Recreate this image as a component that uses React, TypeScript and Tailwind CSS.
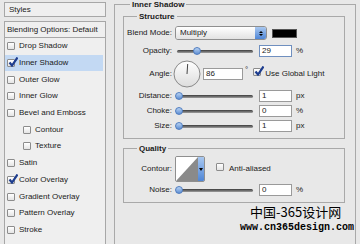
import React from 'react';

function Check({ on }: { on?: boolean }) {
  return (
    <span className="relative inline-flex w-[8px] h-[8px] shrink-0 border border-[#8c8c8c] bg-gradient-to-b from-white to-[#e4e4e4] rounded-[1px]">
      {on && (
        <svg viewBox="0 0 10 10" className="absolute -top-[3px] left-0 w-[10px] h-[10px]">
          <path d="M1.5 5.5 L4 8.5 L9.5 0.5" stroke="#1d3d8f" strokeWidth="2.2" fill="none" />
        </svg>
      )}
    </span>
  );
}

function Slider({ thumb }: { thumb: string }) {
  return (
    <div className="relative w-[84px] h-[8px] pl-[2px] pr-[6px] flex items-center">
      <div className="w-full h-[3px] rounded-full bg-gradient-to-b from-[#3c3c3c] to-[#a0a0a0]" />
      <span className={`absolute top-0 w-[8px] h-[8px] rounded-full bg-gradient-to-b from-[#b9d3f3] to-[#5f8fd3] border border-[#4f7cbf] ${thumb}`} />
    </div>
  );
}

function Field({ value, focus }: { value: string; focus?: boolean }) {
  return (
    <div
      className={`w-[33px] h-[12px] bg-white border ${focus ? 'border-[#6f8fbf]' : 'border-[#9a9a9a]'} pl-[2px] leading-[10px] text-[8px]`}
    >
      {value}
    </div>
  );
}

function Label({ children }: { children: React.ReactNode }) {
  return <div className="w-[48px] text-right shrink-0">{children}</div>;
}

function SliderRow({ label, value, unit, thumb, focus, className }: { label: string; value: string; unit: string; thumb: string; focus?: boolean; className: string }) {
  return (
    <div className={`flex items-center h-[12px] ${className}`}>
      <Label>{label}</Label>
      <div className="ml-[3px]">
        <Slider thumb={thumb} />
      </div>
      <Field value={value} focus={focus} />
      <span className="ml-[4px]">{unit}</span>
    </div>
  );
}

const items = [
  { name: 'Drop Shadow' },
  { name: 'Inner Shadow', on: true, sel: true },
  { name: 'Outer Glow' },
  { name: 'Inner Glow' },
  { name: 'Bevel and Emboss' },
  { name: 'Contour', sub: true },
  { name: 'Texture', sub: true },
  { name: 'Satin' },
  { name: 'Color Overlay', on: true },
  { name: 'Gradient Overlay' },
  { name: 'Pattern Overlay' },
  { name: 'Stroke' },
];

export default function App() {
  return (
    <div className="relative w-[360px] h-[244px] overflow-hidden bg-[#e8e8e8] text-[#1a1a1a] text-[8px] font-['Liberation_Sans',Arial,sans-serif] flex">
      {/* styles list */}
      <div className="ml-[4px] w-[102px] shrink-0 flex flex-col pt-[2px]">
        <div className="h-[15px] border border-[#a7a7a7] bg-[#efefef] flex items-center pl-[4px]">Styles</div>
        <div className="mt-[4px] h-[17px] border border-[#a7a7a7] bg-[#efefef] flex items-center pl-[2px]">
          Blending Options: Default
        </div>
        <div className="flex-1 border-x border-[#a7a7a7] bg-[#efefef] pr-[2px]">
          {items.map((it) => (
            <div
              key={it.name}
              className={`h-[16.7px] flex items-center gap-[4px] ${it.sub ? 'pl-[18px]' : 'pl-[2px]'} ${it.sel ? 'bg-[#c3d9f3]' : ''}`}
            >
              <Check on={it.on} />
              <span>{it.name}</span>
            </div>
          ))}
        </div>
      </div>

      {/* inner shadow settings */}
      <fieldset className="ml-[8px] w-[242px] min-h-[270px] border border-[#a9a9a9] pl-[8px] pr-[10px]">
        <legend className="ml-[7px] px-[2px] font-bold leading-[9px]">Inner Shadow</legend>

        <fieldset className="mt-[3px] border border-[#a9a9a9] pb-[6px]">
          <legend className="ml-[13px] px-[2px] font-bold leading-[9px]">Structure</legend>

          <div className="flex items-center h-[14px] mt-[5px]">
            <Label>Blend Mode:</Label>
            <div className="ml-[3px] w-[92px] h-[14px] flex rounded-[3px] border border-[#8f8f8f] overflow-hidden">
              <div className="flex-1 bg-gradient-to-b from-white to-[#e2e2e2] pl-[4px] leading-[12px]">Multiply</div>
              <div className="w-[11px] bg-gradient-to-b from-[#a9c8f0] to-[#4f86d6] flex flex-col items-center justify-center gap-[1px]">
                <span className="w-0 h-0 border-x-[2px] border-x-transparent border-b-[2px] border-b-black" />
                <span className="w-0 h-0 border-x-[2px] border-x-transparent border-t-[2px] border-t-black" />
              </div>
            </div>
            <div className="ml-[5px] w-[25px] h-[9px] bg-black border border-[#555]" />
          </div>

          <SliderRow className="mt-[5px]" label="Opacity:" value="29" unit="%" thumb="left-[18px]" focus />

          <div className="flex items-center h-[28px] mt-[3px]">
            <Label>Angle:</Label>
            <svg viewBox="0 0 28 28" className="ml-[1px] w-[28px] h-[28px]">
              <defs>
                <linearGradient id="dial" x1="0" y1="0" x2="0" y2="1">
                  <stop offset="0" stopColor="#ffffff" />
                  <stop offset="1" stopColor="#dcdcdc" />
                </linearGradient>
              </defs>
              <circle cx="14" cy="14" r="13" fill="url(#dial)" stroke="#8a8a8a" strokeWidth="1" />
              <line x1="14" y1="14" x2="14.7" y2="4" stroke="#444" strokeWidth="1" />
            </svg>
            <div className="ml-[2px] w-[40px] h-[12px] bg-white border border-[#9a9a9a] pl-[2px] leading-[10px]">86</div>
            <span className="ml-[2px] self-start mt-[7px] leading-[6px]">°</span>
            <span className="ml-[5px]">
              <Check on />
            </span>
            <span className="ml-[4px]">Use Global Light</span>
          </div>

          <SliderRow className="mt-[2px]" label="Distance:" value="1" unit="px" thumb="left-0" />
          <SliderRow className="mt-[3px]" label="Choke:" value="0" unit="%" thumb="left-0" />
          <SliderRow className="mt-[3px]" label="Size:" value="1" unit="px" thumb="left-0" />
        </fieldset>

        <fieldset className="mt-[5px] border border-[#a9a9a9] pb-[6px]">
          <legend className="ml-[13px] px-[2px] font-bold leading-[9px]">Quality</legend>

          <div className="flex items-center h-[26px] mt-[3px]">
            <Label>Contour:</Label>
            <div className="ml-[3px] w-[30px] h-[26px] flex border border-[#8f8f8f] rounded-[2px] overflow-hidden">
              <svg viewBox="0 0 22 24" preserveAspectRatio="none" className="w-[22px] h-full bg-white">
                <polygon points="0,24 22,0 22,24" fill="#8a8a8a" />
              </svg>
              <div className="flex-1 bg-gradient-to-b from-[#a9c8f0] to-[#4f86d6] flex items-center justify-center">
                <span className="w-0 h-0 border-x-[2px] border-x-transparent border-t-[3px] border-t-black" />
              </div>
            </div>
            <span className="ml-[11px]">
              <Check />
            </span>
            <span className="ml-[5px]">Anti-aliased</span>
          </div>

          <SliderRow className="mt-[2px]" label="Noise:" value="0" unit="%" thumb="left-0" />
        </fieldset>
      </fieldset>

      {/* watermark */}
      <div className="absolute left-[250px] top-[204px] text-[13px] leading-[16px] text-black font-['Noto_Sans_CJK_SC',sans-serif]">
        中国-365设计网
      </div>
      <div className="absolute left-[240px] top-[222px] text-[10px] leading-[12px] text-black font-bold font-['Liberation_Mono',monospace]">
        www.cn365design.com
      </div>
    </div>
  );
}
